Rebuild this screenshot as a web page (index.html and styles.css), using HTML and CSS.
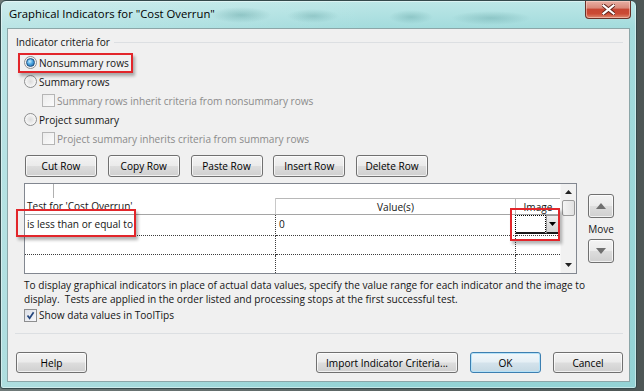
FILE: index.html
```html
<!DOCTYPE html>
<html lang="en">
  <head>
    <meta charset="UTF-8" />
    <title>Graphical Indicators</title>
    <link rel="stylesheet" href="styles.css">
  </head>
  <body>
    <div class="desktop">
      <div class="window">
        <div class="titlebar">
          <span class="title">Graphical Indicators for "Cost Overrun"</span>
          <div class="close">
            <svg width="13" height="11" viewBox="0 0 13 11">
              <path d="M1.5 1.5 L11.5 9.5 M11.5 1.5 L1.5 9.5" stroke="#5e2219" stroke-width="4" stroke-linecap="square" />
              <path d="M1.5 1.5 L11.5 9.5 M11.5 1.5 L1.5 9.5" stroke="#fff" stroke-width="2.2" stroke-linecap="square" />
            </svg>
          </div>
        </div>

        <div class="client">
          <div class="group">
            <div class="group-head">Indicator criteria for</div>

            <div class="options">
              <div class="opt"><span class="radio checked"></span>Nonsummary rows</div>
              <div class="opt"><span class="radio"></span>Summary rows</div>
              <div class="opt sub disabled"><span class="check"></span>Summary rows inherit criteria from nonsummary rows</div>
              <div class="opt"><span class="radio"></span>Project summary</div>
              <div class="opt sub disabled"><span class="check"></span>Project summary inherits criteria from summary rows</div>
            </div>

            <div class="toolbar">
              <button class="btn">Cut Row</button>
              <button class="btn">Copy Row</button>
              <button class="btn">Paste Row</button>
              <button class="btn">Insert Row</button>
              <button class="btn">Delete Row</button>
            </div>

            <div class="grid-area">
              <div class="grid">
                <div class="table">
                  <div class="top"><span class="stub"></span></div>
                  <div class="hd c1">Test for 'Cost Overrun'</div>
                  <div class="hd c2">Value(s)</div>
                  <div class="hd c3">Image</div>

                  <div class="cell c1">is less than or equal to</div>
                  <div class="cell c2">0</div>
                  <div class="cell c3">
                    <div class="combo">
                      <span class="combo-box"></span>
                      <span class="combo-btn">
                        <svg width="7" height="4" viewBox="0 0 7 4"><path d="M0 0 H7 L3.5 4 Z" fill="#000" /></svg>
                      </span>
                    </div>
                  </div>

                  <div class="cell c1"></div>
                  <div class="cell c2"></div>
                  <div class="cell c3"></div>

                  <div class="cell c1 last"></div>
                  <div class="cell c2 last"></div>
                  <div class="cell c3 last"></div>
                </div>
                <div class="scroll">
                  <span class="arrow">
                    <svg width="7" height="4" viewBox="0 0 7 4"><path d="M0 4 H7 L3.5 0 Z" fill="#222" /></svg>
                  </span>
                  <span class="thumb"></span>
                  <span class="track"></span>
                  <span class="arrow">
                    <svg width="7" height="4" viewBox="0 0 7 4"><path d="M0 0 H7 L3.5 4 Z" fill="#222" /></svg>
                  </span>
                </div>
              </div>

              <div class="move">
                <button class="btn move-btn">
                  <svg width="10" height="6" viewBox="0 0 10 6"><path d="M0 6 H10 L5 0 Z" fill="#707070" /></svg>
                </button>
                <span class="move-label">Move</span>
                <button class="btn move-btn">
                  <svg width="10" height="6" viewBox="0 0 10 6"><path d="M0 0 H10 L5 6 Z" fill="#707070" /></svg>
                </button>
              </div>
            </div>

            <p class="note">To display graphical indicators in place of actual data values, specify the value range for each indicator and the image to<br>display.&nbsp; Tests are applied in the order listed and processing stops at the first successful test.</p>

            <div class="opt show">
              <span class="check on">
                <svg width="11" height="11" viewBox="0 0 11 11"><path d="M2.5 5.5 L4.6 8.2 L8.6 2.2" stroke="#24467e" stroke-width="1.7" fill="none" /></svg>
              </span>
              Show data values in ToolTips
            </div>
          </div>

          <div class="footer">
            <button class="btn help">Help</button>
            <span class="spacer"></span>
            <button class="btn import">Import Indicator Criteria...</button>
            <button class="btn ok">OK</button>
            <button class="btn cancel">Cancel</button>
          </div>

          <!-- callouts drawn over the dialog -->
          <span class="mark mark-radio"></span>
          <span class="mark mark-test"></span>
          <span class="mark mark-image"></span>
        </div>
      </div>
    </div>
  </body>
</html>
```

FILE: styles.css
```css
* {
  box-sizing: border-box;
}
body {
  margin: 0;
  background: #55605f;
  font-family: "Open Sans", "Noto Sans", sans-serif;
  font-size: 10.1px;
  color: #151515;
}
.desktop {
  width: 644px;
  height: 391px;
  overflow: hidden;
  background: linear-gradient(to right, #6f7a79, #4d5655);
}
.window {
  width: 637px;
  height: 389px;
  border: 1px solid #34494b;
  border-radius: 6px 6px 3px 3px;
  padding: 0 6px 6px 6px;
  display: flex;
  flex-direction: column;
  background:
    radial-gradient(ellipse 30px 8px at 240px 14px, rgba(70, 140, 140, 0.35), transparent),
    radial-gradient(ellipse 26px 7px at 312px 15px, rgba(70, 140, 140, 0.3), transparent),
    radial-gradient(ellipse 22px 7px at 410px 16px, rgba(70, 140, 140, 0.3), transparent),
    radial-gradient(ellipse 40px 7px at 490px 17px, rgba(70, 140, 140, 0.3), transparent),
    linear-gradient(to right, rgba(255, 255, 255, 0.25), rgba(255, 255, 255, 0) 60%),
    linear-gradient(to bottom, #bde7e7, #a4dcdd 26px, #93d3d5);
  box-shadow: inset 0 0 0 1px rgba(255, 255, 255, 0.45);
}
.titlebar {
  height: 27px;
  flex: none;
  display: flex;
  justify-content: space-between;
  align-items: flex-start;
  padding-left: 2px;
}
.title {
  margin-top: 6px;
  font-size: 11.3px;
  line-height: 14px;
  color: #000;
}
.close {
  width: 46px;
  height: 18px;
  margin-right: -1px;
  border: 1px solid #6a3128;
  border-top: none;
  border-radius: 0 0 4px 4px;
  display: flex;
  justify-content: center;
  align-items: center;
  background: linear-gradient(to bottom, #e8b0a4 0%, #d98a7b 40%, #c74733 50%, #cb4a34 75%, #de8a70 100%);
  box-shadow: inset 0 0 0 1px rgba(255, 220, 210, 0.5);
}

/* client area */
.client {
  flex: 1;
  position: relative;
  background: #f0f0f0;
  border: 1px solid #8ca6a8;
  padding: 6px 6px 0 7px;
  display: flex;
  flex-direction: column;
}
.group {
  border-bottom: 1px solid #dcdfe2;
  padding-bottom: 9px;
}
.group-head {
  display: flex;
  align-items: center;
  height: 14px;
  padding-left: 1px;
}
.group-head::after {
  content: "";
  flex: 1;
  margin-left: 4px;
  border-top: 1px solid #dcdfe2;
}
.options {
  margin-top: 4px;
}
.opt {
  display: flex;
  align-items: center;
  gap: 2px;
  height: 19px;
  padding-left: 9px;
}
.opt.sub {
  padding-left: 27px;
}
.opt.disabled {
  color: #8b8b8b;
}
.radio {
  width: 13px;
  height: 13px;
  border-radius: 50%;
  border: 1px solid #8d8e8f;
  background: radial-gradient(circle at 50% 50%, #dcdcdc 0, #f4f4f4 60%, #fff 100%);
  display: flex;
  justify-content: center;
  align-items: center;
}
.radio.checked::after {
  content: "";
  width: 7px;
  height: 7px;
  border-radius: 50%;
  border: 1px solid #1b4f82;
  background: radial-gradient(circle at 40% 35%, #c8ecff 0, #4ba6e0 45%, #1a5c9e 100%);
}
.check {
  width: 13px;
  height: 13px;
  border: 1px solid #b5b5b5;
  background: linear-gradient(135deg, #ececec, #fbfbfb);
  display: flex;
  justify-content: center;
  align-items: center;
}
.check.on {
  border-color: #8d8e8f;
  background: linear-gradient(135deg, #dcdfe6, #f7f8fb);
}

/* buttons */
.btn {
  font: inherit;
  color: #000;
  padding: 0;
  height: 22px;
  border: 1px solid #707070;
  border-radius: 3px;
  background: linear-gradient(to bottom, #f3f3f3 0%, #ebebeb 48%, #dddddd 52%, #cfcfcf 100%);
  box-shadow: inset 0 0 0 1px rgba(255, 255, 255, 0.7);
}
.toolbar {
  display: flex;
  gap: 10.75px;
  margin-top: 7px;
  padding-left: 10px;
}
.toolbar .btn {
  width: 72px;
}

/* grid */
.grid-area {
  display: flex;
  margin-top: 6px;
  padding-left: 9px;
}
.grid {
  width: 553px;
  height: 91px;
  border: 1px solid #828790;
  background: #fff;
  display: flex;
}
.table {
  display: grid;
  grid-template-columns: 251px 240px 44px;
  grid-template-rows: 14px 17px 21px 19px 18px;
}
.top {
  grid-column: 1 / 4;
}
.stub {
  display: block;
  width: 29px;
  height: 14px;
  border-right: 1px solid #b0b0b0;
}
.hd {
  line-height: 16px;
  border-bottom: 1px solid #a5a5a5;
  white-space: nowrap;
  overflow: hidden;
}
.hd.c1 {
  padding-left: 2px;
  border-right: 1px solid #c8c8c8;
}
.hd.c2,
.hd.c3 {
  text-align: center;
  border-top: 1px solid #b8b8b8;
}
.hd.c2 {
  border-right: 1px solid #b8b8b8;
}
.cell {
  border-bottom: 1px dotted #3c3c3c;
  line-height: 14px;
  padding-top: 2px;
  white-space: nowrap;
}
.cell.last {
  border-bottom: none;
}
.cell.c1 {
  padding-left: 2px;
  border-right: 1px dotted #3c3c3c;
}
.cell.c2 {
  padding-left: 3px;
  border-right: 1px dotted #3c3c3c;
}
.cell.c3 {
  padding-top: 0;
}
.combo {
  display: flex;
  width: 44px;
  height: 19px;
  margin-left: -1px;
}
.combo-box {
  flex: 1;
  background: #fff;
  border: 1px dotted #000;
  border-bottom: 2px solid #1a1a1a;
}
.combo-btn {
  width: 13px;
  display: flex;
  justify-content: center;
  align-items: center;
  background: linear-gradient(to bottom, #efefef, #d4d4d4);
  border: 1px solid #9a9a9a;
  border-bottom: 2px solid #1a1a1a;
}
.scroll {
  width: 16px;
  display: flex;
  flex-direction: column;
  background: #f1f1f1;
  border-left: 1px solid #f8f8f8;
}
.arrow {
  height: 16px;
  display: flex;
  justify-content: center;
  align-items: center;
}
.thumb {
  height: 16px;
  margin: 0 1px;
  border: 1px solid #9a9a9a;
  border-radius: 2px;
  background: linear-gradient(to right, #f4f4f4, #e2e2e2);
}
.track {
  flex: 1;
}
.move {
  margin-left: 11px;
  width: 26px;
  display: flex;
  flex-direction: column;
  align-items: center;
  padding-top: 11px;
}
.move-btn {
  width: 26px;
  height: 24px;
  display: flex;
  justify-content: center;
  align-items: center;
}
.move-label {
  margin: 4px 0 3px;
  line-height: 14px;
  font-size: 10px;
}

.note {
  margin: 5px 0 0;
  padding-left: 9px;
  line-height: 13.5px;
  white-space: nowrap;
}
.opt.show {
  margin-top: 0;
  height: 18px;
}

/* footer */
.footer {
  display: flex;
  gap: 12px;
  padding: 18px 0 0 1px;
}
.footer .btn {
  height: 21px;
}
.spacer {
  flex: 1;
}
.help,
.ok {
  width: 71px;
}
.cancel {
  width: 70px;
}
.import {
  width: 142px;
}
.ok {
  border-color: #3c7fb1;
  box-shadow: inset 0 0 0 1px #b5e2f8;
  background: linear-gradient(to bottom, #f1f7fb 0%, #e5eff5 48%, #d4e3ec 52%, #c5d8e3 100%);
}

/* red callouts */
.mark {
  position: absolute;
  border: 2px solid #e2262b;
  box-shadow: 2px 3px 3px rgba(0, 0, 0, 0.3);
}
.mark-radio {
  left: 10px;
  top: 24px;
  width: 115px;
  height: 20px;
}
.mark-test {
  left: 8px;
  top: 180px;
  width: 120px;
  height: 28px;
}
.mark-image {
  left: 502px;
  top: 179px;
  width: 50px;
  height: 33px;
}
```
